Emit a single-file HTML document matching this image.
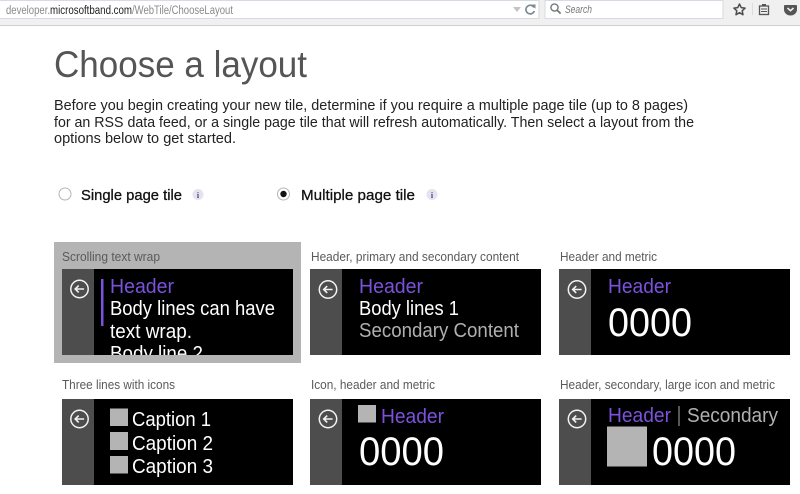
<!DOCTYPE html>
<html lang="en">
<head>
<meta charset="utf-8">
<title>Choose a layout</title>
<style>
html,body{margin:0;padding:0;background:#fff;width:800px;height:494px;overflow:hidden}
svg{display:block}
text{font-family:"Liberation Sans",sans-serif;white-space:pre}
.lb{font-size:12.5px;fill:#5a5a5a}
.h{font-size:20px;fill:#7a52dc}
.b{font-size:20px;fill:#fff}
.s{font-size:20px;fill:#b0b0b0}
.m{font-size:40px;fill:#fff}
.p{font-size:14.5px;fill:#222}
.r{font-size:15px;fill:#111;stroke:#111;stroke-width:.3px}
</style>
</head>
<body>
<svg width="800" height="494" viewBox="0 0 800 494" xmlns="http://www.w3.org/2000/svg">
<defs>
<g id="arr" fill="none" stroke="#f2f2f2">
<circle r="8.7" stroke-width="1.5"/>
<path d="M4.6 0H-4.2M-0.8-3.4L-4.3 0L-0.8 3.4" stroke-width="1.6"/>
</g>
</defs>

<!-- browser chrome -->
<rect x="0" y="0" width="800" height="25" fill="#f0f0f0"/>
<rect x="0" y="25" width="800" height="1" fill="#cfcfcf"/>
<rect x="-2" y="0.5" width="541" height="18" fill="#fff" stroke="#d5dbe2"/>
<rect x="545" y="0.5" width="178" height="18" fill="#fff" stroke="#d5dbe2"/>
<text x="6" y="14" font-size="11.5" fill="#8a8a8a" textLength="44" lengthAdjust="spacingAndGlyphs">developer.</text>
<text x="50" y="14" font-size="11.5" fill="#222" textLength="82" lengthAdjust="spacingAndGlyphs">microsoftband.com</text>
<text x="132" y="14" font-size="11.5" fill="#8a8a8a" textLength="101" lengthAdjust="spacingAndGlyphs">/WebTile/ChooseLayout</text>
<path d="M513 7h8l-4 5z" fill="#c4c4c4"/>
<path d="M534 7.5A4.3 4.3 0 1 0 534.3 11" fill="none" stroke="#7d8b95" stroke-width="1.7"/>
<path d="M531 4.5h4.5v4.2z" fill="#7d8b95"/>
<circle cx="554.5" cy="7.5" r="3.6" fill="none" stroke="#777" stroke-width="1.4"/>
<path d="M557 10l3.6 3.6" stroke="#777" stroke-width="1.8"/>
<text x="565" y="13" font-size="11" font-style="italic" fill="#777" textLength="27" lengthAdjust="spacingAndGlyphs">Search</text>
<path d="M739.5 4l1.7 3.6 3.9.5-2.9 2.7.8 3.9-3.5-2-3.5 2 .8-3.9-2.9-2.7 3.9-.5z" fill="none" stroke="#4f4f4f" stroke-width="1.5" stroke-linejoin="round"/>
<rect x="752" y="3" width="1" height="12" fill="#dcdcdc"/>
<rect x="759.5" y="6" width="9" height="8.5" fill="none" stroke="#555" stroke-width="1.3"/>
<rect x="762" y="4" width="4" height="2.5" fill="#555"/>
<path d="M761 9h6M761 11.5h6" stroke="#555"/>
<path d="M785 5h11a1 1 0 0 1 1 1v3.5a6.5 6 0 0 1-13 0V6a1 1 0 0 1 1-1z" fill="#555"/>
<path d="M787.5 8l3 2.7 3-2.7" fill="none" stroke="#f0f0f0" stroke-width="1.6"/>

<!-- title + intro -->
<text x="54" y="77" font-size="37" fill="#555" textLength="253" lengthAdjust="spacingAndGlyphs">Choose a layout</text>
<text class="p" x="54" y="110" textLength="634" lengthAdjust="spacingAndGlyphs">Before you begin creating your new tile, determine if you require a multiple page tile (up to 8 pages)</text>
<text class="p" x="54" y="127" textLength="640" lengthAdjust="spacingAndGlyphs">for an RSS data feed, or a single page tile that will refresh automatically. Then select a layout from the</text>
<text class="p" x="54" y="143" textLength="182" lengthAdjust="spacingAndGlyphs">options below to get started.</text>

<!-- radios -->
<circle cx="65" cy="194" r="6" fill="#fff" stroke="#b5b5b5"/>
<text class="r" x="81" y="200" textLength="101" lengthAdjust="spacingAndGlyphs">Single page tile</text>
<circle cx="198" cy="194.5" r="5.5" fill="#e6e3ef"/>
<text x="198" y="198" font-size="8" font-weight="bold" fill="#4a3a8c" text-anchor="middle" style="font-family:'Liberation Serif',serif">i</text>
<circle cx="283.5" cy="194" r="6" fill="#fff" stroke="#b5b5b5"/>
<circle cx="283.5" cy="194" r="3.2" fill="#111"/>
<text class="r" x="301" y="200" textLength="114" lengthAdjust="spacingAndGlyphs">Multiple page tile</text>
<circle cx="432" cy="194.5" r="5.5" fill="#e6e3ef"/>
<text x="432" y="198" font-size="8" font-weight="bold" fill="#4a3a8c" text-anchor="middle" style="font-family:'Liberation Serif',serif">i</text>

<!-- selected card -->
<rect x="54" y="242" width="247" height="121" fill="#b4b4b4"/>

<!-- labels -->
<text class="lb" x="62" y="261" textLength="98" lengthAdjust="spacingAndGlyphs">Scrolling text wrap</text>
<text class="lb" x="311" y="261" textLength="208" lengthAdjust="spacingAndGlyphs">Header, primary and secondary content</text>
<text class="lb" x="560" y="261" textLength="97" lengthAdjust="spacingAndGlyphs">Header and metric</text>
<text class="lb" x="62" y="389" textLength="113" lengthAdjust="spacingAndGlyphs">Three lines with icons</text>
<text class="lb" x="311" y="389" textLength="124" lengthAdjust="spacingAndGlyphs">Icon, header and metric</text>
<text class="lb" x="560" y="389" textLength="215" lengthAdjust="spacingAndGlyphs">Header, secondary, large icon and metric</text>

<!-- tile 1 -->
<svg x="62" y="269" width="231" height="86" viewBox="62 269 231 86" overflow="hidden">
<rect x="62" y="269" width="231" height="86" fill="#000"/>
<rect x="62" y="269" width="32" height="86" fill="#4d4d4d"/>
<use href="#arr" x="79.5" y="289"/>
<rect x="101" y="279" width="2.5" height="47" fill="#7a52dc"/>
<text class="h" x="110" y="293" textLength="64" lengthAdjust="spacingAndGlyphs">Header</text>
<text class="b" x="110" y="315" textLength="165" lengthAdjust="spacingAndGlyphs">Body lines can have</text>
<text class="b" x="110" y="338" textLength="82" lengthAdjust="spacingAndGlyphs">text wrap.</text>
<text class="b" x="110" y="360" textLength="93" lengthAdjust="spacingAndGlyphs">Body line 2</text>
</svg>

<!-- tile 2 -->
<rect x="310" y="269" width="231" height="86" fill="#000"/>
<rect x="310" y="269" width="32" height="86" fill="#4d4d4d"/>
<use href="#arr" x="328" y="289.5"/>
<text class="h" x="359" y="293" textLength="64" lengthAdjust="spacingAndGlyphs">Header</text>
<text class="b" x="359" y="315" textLength="100" lengthAdjust="spacingAndGlyphs">Body lines 1</text>
<text class="s" x="359" y="337" textLength="160" lengthAdjust="spacingAndGlyphs">Secondary Content</text>

<!-- tile 3 -->
<rect x="559" y="269" width="231" height="86" fill="#000"/>
<rect x="559" y="269" width="32" height="86" fill="#4d4d4d"/>
<use href="#arr" x="577" y="289.5"/>
<text class="h" x="608" y="293" textLength="63" lengthAdjust="spacingAndGlyphs">Header</text>
<text class="m" x="608" y="336" textLength="84" lengthAdjust="spacingAndGlyphs">0000</text>

<!-- tile 4 -->
<rect x="62" y="399" width="231" height="86" fill="#000"/>
<rect x="62" y="399" width="32" height="86" fill="#4d4d4d"/>
<use href="#arr" x="79.5" y="419"/>
<rect x="110" y="408.5" width="18" height="17.5" fill="#b4b4b4"/>
<rect x="110" y="432" width="18" height="18" fill="#b4b4b4"/>
<rect x="110" y="456" width="18" height="17.5" fill="#b4b4b4"/>
<text class="b" x="132" y="426" textLength="79" lengthAdjust="spacingAndGlyphs">Caption 1</text>
<text class="b" x="132" y="450" textLength="81" lengthAdjust="spacingAndGlyphs">Caption 2</text>
<text class="b" x="132" y="473" textLength="81" lengthAdjust="spacingAndGlyphs">Caption 3</text>

<!-- tile 5 -->
<rect x="310" y="399" width="231" height="86" fill="#000"/>
<rect x="310" y="399" width="32" height="86" fill="#4d4d4d"/>
<use href="#arr" x="328" y="419"/>
<rect x="358" y="405" width="18" height="17.5" fill="#b4b4b4"/>
<text class="h" x="381" y="423" textLength="63" lengthAdjust="spacingAndGlyphs">Header</text>
<text class="m" x="359" y="465" textLength="85" lengthAdjust="spacingAndGlyphs">0000</text>

<!-- tile 6 -->
<rect x="559" y="399" width="231" height="86" fill="#000"/>
<rect x="559" y="399" width="32" height="86" fill="#4d4d4d"/>
<use href="#arr" x="577" y="419"/>
<text class="h" x="608" y="422" textLength="63" lengthAdjust="spacingAndGlyphs">Header</text>
<rect x="678.5" y="406" width="1" height="20" fill="#b0b0b0"/>
<text class="s" x="687" y="422" textLength="91" lengthAdjust="spacingAndGlyphs">Secondary</text>
<rect x="607" y="426.5" width="40" height="40" fill="#b4b4b4"/>
<text class="m" x="652" y="465" textLength="84" lengthAdjust="spacingAndGlyphs">0000</text>
</svg>
</body>
</html>
